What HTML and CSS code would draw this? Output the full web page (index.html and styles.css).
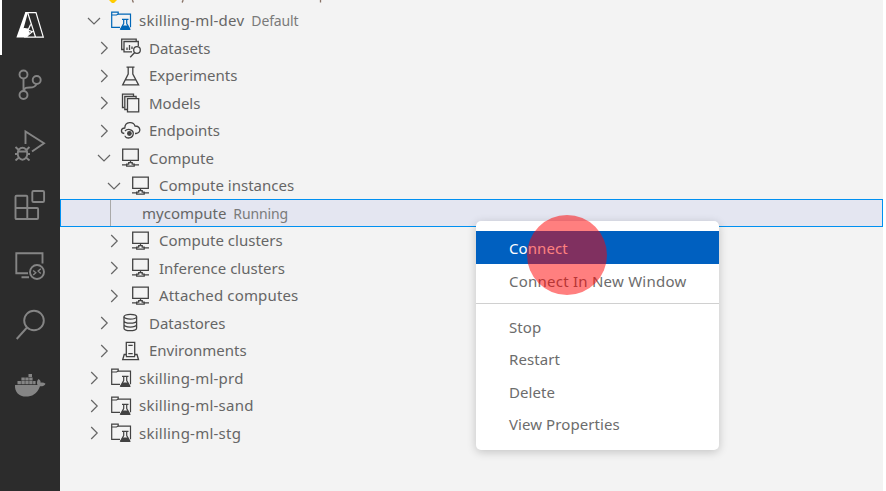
FILE: index.html
```html
<!DOCTYPE html>
<html lang="en">
<head>
<meta charset="utf-8">
<title>Azure Machine Learning</title>
<link rel="stylesheet" href="styles.css">
</head>
<body>
<svg width="0" height="0" class="defs">
  <symbol id="right" viewBox="0 0 20 20"><path d="M7.2 4l6 6-6 6" fill="none" stroke="currentColor" stroke-width="1.2"/></symbol>
  <symbol id="down" viewBox="0 0 20 20"><path d="M4 7l6 6 6-6" fill="none" stroke="currentColor" stroke-width="1.2"/></symbol>
  <symbol id="workspace" viewBox="0 0 22 20"><g fill="none" stroke="currentColor" stroke-width="1.2"><path d="M10 16.3H1.7V1.2h6.5v2H20.5v13"/><path d="M1.7 4h4.8l1.7-1"/><path d="M12 8.3h6.5M13.7 8.5v4l-3 5.5h9l-3-5.5v-4"/></g><path d="M12.3 14.5h5.8l2.4 4.5H10z" fill="currentColor"/></symbol>
  <symbol id="datasets" viewBox="0 0 22 20"><g fill="none" stroke="currentColor" stroke-width="1.3"><path d="M4 11.5H1.7V1.2h14.5v2"/><path d="M12 13.8H4V3.5h14.3V8"/><circle cx="17" cy="12" r="3.3"/><path d="M14.7 14.5l-4.5 4.7"/><path d="M7 12V9.5M9.5 12V7M12 11V8.5"/></g></symbol>
  <symbol id="experiments" viewBox="0 0 22 20"><g fill="none" stroke="currentColor" stroke-width="1.3"><path d="M6.5 1.2h8M8.2 1.2V8L2.7 18.9h15.9L12.8 8V1.2M5.8 13.9h9.7"/></g></symbol>
  <symbol id="models" viewBox="0 0 22 20"><g fill="none" stroke="currentColor" stroke-width="1.3"><path d="M4.2 14.5H2.5V1.2h11v2"/><path d="M7 16.5H4.8V3.5h11.3v2"/><path d="M7.5 5.7h11.2v13.2H7.5z"/></g></symbol>
  <symbol id="endpoints" viewBox="0 0 22 20"><g fill="none" stroke="currentColor" stroke-width="1.3"><path d="M4.3 12.5C.5 12 .3 7.3 4.8 7 5 .3 13.5.3 15 5c6 .2 6.5 7 1 7.5h-1"/><path d="M5 10a4.7 4 0 0 1 8.3 1.8c.2 6.5-8.1 6.2-8.3 3"/></g><circle cx="9.4" cy="12.5" r="2.4" fill="currentColor"/></symbol>
  <symbol id="compute" viewBox="0 0 22 20"><g fill="none" stroke="currentColor" stroke-width="1.3"><path d="M2.7 1.2h15.6v11.2H2.7zM10.5 12.5v2M2 16.9h5M13.8 16.9H19"/><path d="M6.7 18.1v-2h2v-1.4h3.5v1.4h2v2z"/></g></symbol>
  <symbol id="datastores" viewBox="0 0 22 20"><g fill="none" stroke="currentColor" stroke-width="1.3"><ellipse cx="10.3" cy="3.7" rx="6.3" ry="2.4"/><path d="M4 3.7v11.5c0 3.3 12.6 3.3 12.6 0V3.7M4 7.7c0 3.3 12.6 3.3 12.6 0M4 11.6c0 3.3 12.6 3.3 12.6 0"/></g></symbol>
  <symbol id="environments" viewBox="0 0 22 20"><g fill="none" stroke="currentColor" stroke-width="1.3"><path d="M6.3 15.5V1.3h8.4v14.2M6.3 13.5H4.2l-1.5 5.2h15.8L17 13.5h-2.3M6 15.7h9M8.3 4.4h4.4M8.3 12.7h4.4"/></g></symbol>
</svg>
<div class="window">
  <nav class="activity">
    <div class="slot active"><svg viewBox="0 0 32 32"><path d="M11.3 3.2H14L9.6 19.2l4 1L16 24l-5 4.6H2.4z" fill="#fff"/><path d="M11.3 3.6H22l7.3 24.6H11.5l6.8-5.4-8.5-3.3 4.7.6 2.1-4.6M13.8 4L21.5 28" fill="none" stroke="#fff" stroke-width="1.2"/></svg></div>
    <div class="slot"><svg viewBox="0 0 32 32"><g class="line"><circle cx="9.5" cy="5.5" r="4"/><circle cx="22.7" cy="11" r="4"/><circle cx="9.5" cy="26" r="4"/><path d="M9.5 9.5V22M9.7 22c1-3.5 3-3.5 6-3.5 4 0 6-1 6.8-3.5"/></g></svg></div>
    <div class="slot"><svg viewBox="0 0 32 32"><g class="line"><path d="M11.5 15V2.5L30 14.2 18 22.5"/><ellipse cx="8.5" cy="24.7" rx="4.8" ry="6"/><path d="M4 22.5h9M1.5 18l3.2 3M15.5 18l-3.2 3M1 25h3M13 25h3M1.5 31.5l3.5-3M15.5 31.5l-3.5-3"/></g></svg></div>
    <div class="slot"><svg viewBox="0 0 32 32"><g class="line"><path d="M2.5 6.7h9.8q1 0 1 1V19h9.8q1 0 1 1v9q0 1-1 1H2.5q-1 0-1-1V7.7q0-1 1-1zM1.5 19h11.8v11"/><rect x="18.3" y="2" width="11.8" height="11" rx="1.3"/></g></svg></div>
    <div class="slot"><svg viewBox="0 0 32 32"><g class="line"><path d="M14 24.2H2.3V4.3h26.2V14.5M7.5 28.2H15"/><circle cx="23" cy="23" r="7"/></g><path d="M19.2 21.5l2.6 2.3-2.6 2.3M26.8 19.8l-2.6 2.3 2.6 2.3" fill="none" stroke="#858585" stroke-width="1.4"/></svg></div>
    <div class="slot"><svg viewBox="0 0 32 32"><g class="line"><circle cx="20" cy="11.5" r="9.8"/><path d="M13 18.5L2.7 30"/></g></svg></div>
    <div class="slot"><svg viewBox="0 0 32 32"><path fill="#858585" d="M1 16h22.5c-1-2-.5-4.5 1-6 1.5 1 2.2 2 2.2 3.7 1.6-.4 3.5 0 4.8 1-1 2-3 2.7-5.5 2.5C23 25 18 27.6 12 27.6 5 27.6.5 23 1 16zM3.5 12h3.4v3.2H3.5zM7.4 12h3.4v3.2H7.4zM11.3 12h3.4v3.2h-3.4zM15.2 12h3.4v3.2h-3.4zM19.1 12h2.5v3.2h-2.5zM7.4 8.5h3.4v3H7.4zM11.3 8.5h3.4v3h-3.4zM15.2 8.5h3.4v3h-3.4zM14.5 5H18v3h-3.5z"/></svg></div>
  </nav>
  <main class="tree">
    <div class="row subscription"><svg viewBox="0 0 230 28"><path d="M9 18h8v3l-3 3h-2l-3-3z" fill="#fc0"/><path d="M33.5 18q-2 3 0 5.5M82 18q2 3 0 5.5M220.5 14v9.5" fill="none" stroke="#8a7468" stroke-width="1.3"/></svg></div>
    <div class="row l1 current"><svg class="chev"><use href="#down"/></svg><svg class="ico"><use href="#workspace"/></svg><span>skilling-ml-dev</span><small>Default</small></div>
    <div class="row l2"><svg class="chev"><use href="#right"/></svg><svg class="ico"><use href="#datasets"/></svg><span>Datasets</span></div>
    <div class="row l2"><svg class="chev"><use href="#right"/></svg><svg class="ico"><use href="#experiments"/></svg><span>Experiments</span></div>
    <div class="row l2"><svg class="chev"><use href="#right"/></svg><svg class="ico"><use href="#models"/></svg><span>Models</span></div>
    <div class="row l2"><svg class="chev"><use href="#right"/></svg><svg class="ico"><use href="#endpoints"/></svg><span>Endpoints</span></div>
    <div class="row l2"><svg class="chev"><use href="#down"/></svg><svg class="ico"><use href="#compute"/></svg><span>Compute</span></div>
    <div class="row l3"><svg class="chev"><use href="#down"/></svg><svg class="ico"><use href="#compute"/></svg><span>Compute instances</span></div>
    <div class="row selected"><i class="guide"></i><span>mycompute</span><small>Running</small></div>
    <div class="row l3"><svg class="chev"><use href="#right"/></svg><svg class="ico"><use href="#compute"/></svg><span>Compute clusters</span></div>
    <div class="row l3"><svg class="chev"><use href="#right"/></svg><svg class="ico"><use href="#compute"/></svg><span>Inference clusters</span></div>
    <div class="row l3 attached"><svg class="chev"><use href="#right"/></svg><svg class="ico"><use href="#compute"/></svg><span>Attached computes</span></div>
    <div class="row l2"><svg class="chev"><use href="#right"/></svg><svg class="ico"><use href="#datastores"/></svg><span>Datastores</span></div>
    <div class="row l2"><svg class="chev"><use href="#right"/></svg><svg class="ico"><use href="#environments"/></svg><span>Environments</span></div>
    <div class="row l1"><svg class="chev"><use href="#right"/></svg><svg class="ico"><use href="#workspace"/></svg><span>skilling-ml-prd</span></div>
    <div class="row l1"><svg class="chev"><use href="#right"/></svg><svg class="ico"><use href="#workspace"/></svg><span>skilling-ml-sand</span></div>
    <div class="row l1"><svg class="chev"><use href="#right"/></svg><svg class="ico"><use href="#workspace"/></svg><span>skilling-ml-stg</span></div>
  </main>
  <div class="menu">
    <div class="item hover">Connect</div>
    <div class="item wide">Connect In New Window</div>
    <hr>
    <div class="item">Stop</div>
    <div class="item">Restart</div>
    <div class="item">Delete</div>
    <div class="item">View Properties</div>
  </div>
  <div class="click"></div>
</div>
</body>
</html>
```
FILE: styles.css
```css
* { box-sizing: border-box; }
body { margin: 0; background: #fff; font: 15px/27px "Noto Sans", "Open Sans", sans-serif; color: #666; }
.defs { position: absolute; }
.window { position: relative; display: flex; width: 886px; height: 491px; overflow: hidden; }
.activity { width: 60px; flex: none; background: #2c2c2c; display: flex; flex-direction: column; }
.slot { height: 60px; flex: none; padding: 0 0 10px 14px; display: flex; align-items: center; border-left: 0 solid #fff; }
.slot svg { width: 32px; height: 32px; }
.active { height: 55px; border-left-width: 2px; padding: 0 0 5px 12px; margin-bottom: 5px; }
.line { fill: none; stroke: #858585; stroke-width: 1.9; }
.tree { width: 823px; flex: none; height: 515px; margin-top: -20.7px; background: #f3f3f3; }
.row { height: 27.5px; display: flex; align-items: center; white-space: nowrap; }
.row small { font-size: 14px; margin-left: 7px; color: #7a7a7a; letter-spacing: -.15px; }
.chev { width: 20px; height: 20px; margin-right: 6px; flex: none; }
.ico { width: 22px; height: 20px; margin-right: 7px; flex: none; color: #424242; }
.current .ico { color: #0067b8; }
.l1 { padding-left: 24px; }
.l1 span { letter-spacing: .24px; }
.l2 { padding-left: 34px; }
.l3 { padding-left: 44px; }
.attached span { letter-spacing: .16px; }
.subscription { padding-left: 40px; }
.subscription svg { width: 230px; height: 28px; }
.selected { background: #e4e6f1; border: 1px solid #0090f1; padding-left: 49px; }
.guide { height: 26px; border-left: 1px solid #a9a9a9; margin-right: 31px; }
.menu { position: absolute; left: 476px; top: 221px; width: 243px; height: 229px; padding-top: 10px; background: #fff; border-radius: 5px; box-shadow: 0 2px 10px rgba(0,0,0,.2); color: #6c6c6c; }
.item { height: 32.5px; line-height: 34px; padding-left: 33px; letter-spacing: .08px; }
.wide { letter-spacing: .24px; }
.hover { height: 33px; background: #0060c0; color: #fff; }
.menu hr { border: 0; height: 1px; background: #d0d0d0; margin: 6px 0; }
.click { position: absolute; left: 527px; top: 215px; width: 80px; height: 80px; border-radius: 50%; background: rgba(255,0,0,.5); }
```
